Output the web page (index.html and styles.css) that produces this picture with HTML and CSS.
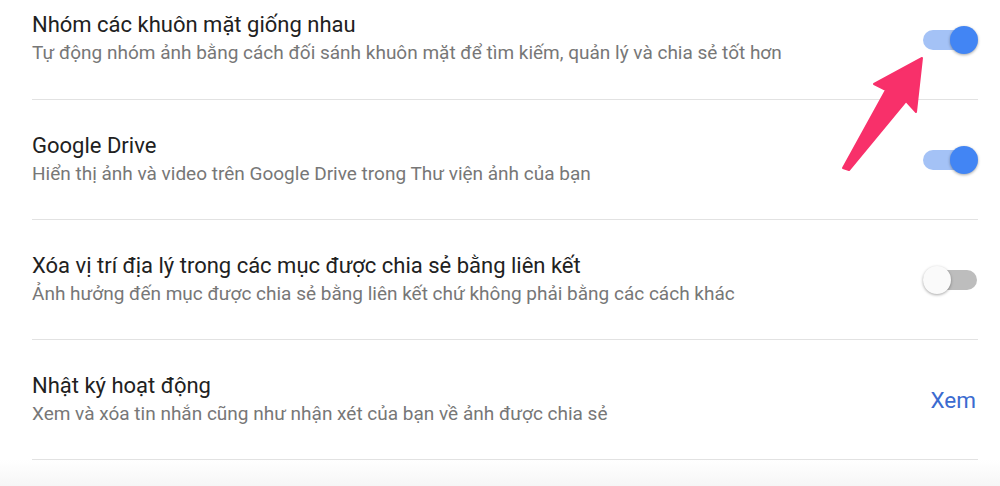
FILE: index.html
```html
<!DOCTYPE html>
<html lang="vi">
<head>
    <meta charset="UTF-8">
    <meta name="viewport" content="width=device-width, initial-scale=1.0">
    <title>Cài đặt ảnh</title>
    <link rel="stylesheet" href="styles.css">
</head>
<body>
    <div class="settings">
        <div class="row">
            <div class="text">
                <div class="title">Nhóm các khuôn mặt giống nhau</div>
                <div class="desc">Tự động nhóm ảnh bằng cách đối sánh khuôn mặt để tìm kiếm, quản lý và chia sẻ tốt hơn</div>
            </div>
            <div class="switch on"><span class="track"></span><span class="thumb"></span></div>
        </div>
        <div class="row">
            <div class="text">
                <div class="title">Google Drive</div>
                <div class="desc">Hiển thị ảnh và video trên Google Drive trong Thư viện ảnh của bạn</div>
            </div>
            <div class="switch on"><span class="track"></span><span class="thumb"></span></div>
        </div>
        <div class="row">
            <div class="text">
                <div class="title">Xóa vị trí địa lý trong các mục được chia sẻ bằng liên kết</div>
                <div class="desc">Ảnh hưởng đến mục được chia sẻ bằng liên kết chứ không phải bằng các cách khác</div>
            </div>
            <div class="switch"><span class="track"></span><span class="thumb"></span></div>
        </div>
        <div class="row">
            <div class="text">
                <div class="title">Nhật ký hoạt động</div>
                <div class="desc">Xem và xóa tin nhắn cũng như nhận xét của bạn về ảnh được chia sẻ</div>
            </div>
            <a class="link" href="#">Xem</a>
        </div>
    </div>

    <!-- annotation arrow pointing at the first switch -->
    <svg class="arrow" width="100" height="130" viewBox="830 50 100 130">
        <polygon points="922,58 916,112 906,101 849,170 843,168 886,90 874,84" fill="#f8306a" stroke="#f8306a" stroke-width="2" stroke-linejoin="round"/>
    </svg>
</body>
</html>
```

FILE: styles.css
```css
body {
    margin: 0;
    font-family: Roboto, "Noto Sans", Arial, sans-serif;
    background: linear-gradient(to bottom, #fff 0, #fff 460px, #f6f6f6 486px);
    min-height: 486px;
    position: relative;
    overflow: hidden;
}
.settings {
    padding-right: 22px;
}
.row {
    display: flex;
    align-items: center;
    height: 119px;
    margin-left: 32px;
    border-bottom: 1px solid #e2e2e2;
}
.row:first-child {
    height: 99px;
    align-items: flex-start;
}
.row:first-child .text {
    padding-top: 11px;
}
.row:first-child .switch {
    margin-top: 26px;
}
.text {
    flex: 1;
}
.title {
    font-size: 22px;
    line-height: 28px;
    color: #212121;
}
.desc {
    font-size: 19px;
    line-height: 28px;
    color: #777;
}
.switch {
    position: relative;
    width: 55px;
    height: 28px;
    flex-shrink: 0;
}
.track {
    position: absolute;
    left: 0;
    right: 1px;
    top: 4px;
    height: 20px;
    border-radius: 10px;
    background: #bdbdbd;
}
.thumb {
    position: absolute;
    top: 0;
    left: 0;
    width: 28px;
    height: 28px;
    border-radius: 50%;
    background: #fafafa;
    box-shadow: 0 1px 3px rgba(0, 0, 0, 0.35);
}
.switch.on .track {
    background: #a4c2f6;
}
.switch.on .thumb {
    left: auto;
    right: 0;
    background: #4285f4;
}
.link {
    font-size: 22.5px;
    color: #3b6bd0;
    text-decoration: none;
    margin-right: 2px;
}
.arrow {
    position: absolute;
    left: 830px;
    top: 50px;
}
```
